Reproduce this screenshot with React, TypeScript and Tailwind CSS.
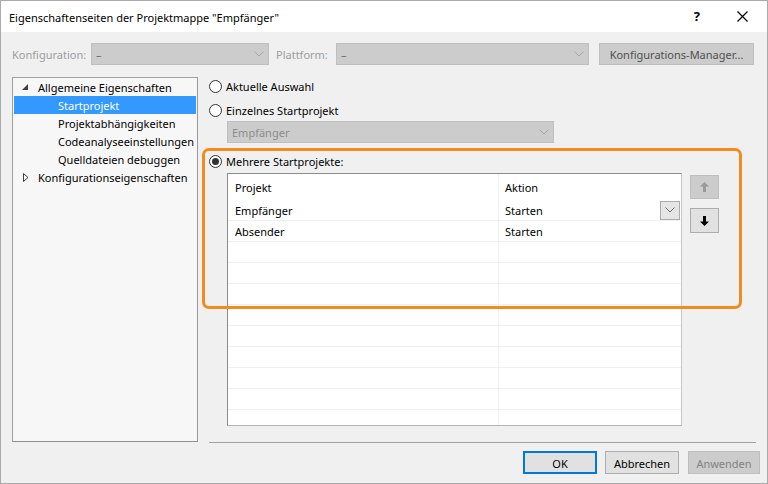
import React from "react";

function Chevron({ className = "" }: { className?: string }) {
  return (
    <svg width="10" height="6" viewBox="0 0 10 6" className={className}>
      <path d="M0.5 0.5 L5 5 L9.5 0.5" fill="none" stroke="currentColor" strokeWidth="1" />
    </svg>
  );
}

function Dropdown({ text, className, textClass }: { text: string; className: string; textClass: string }) {
  return (
    <div className={`flex items-center justify-between h-[22px] bg-[#cccccc] border border-[#bfbfbf] pl-[4px] pr-[4px] ${className}`}>
      <span className={textClass}>{text}</span>
      <Chevron className="text-[#a6a6a6]" />
    </div>
  );
}

function Radio({ checked, label }: { checked?: boolean; label: string }) {
  return (
    <div className="flex items-center h-[18px]">
      <div className="w-[13px] h-[13px] rounded-full border border-[#333333] bg-white flex items-center justify-center">
        {checked && <div className="w-[7px] h-[7px] rounded-full bg-[#333333]" />}
      </div>
      <span className="ml-[4px] pt-[1px] text-[#000000]">{label}</span>
    </div>
  );
}

function Arrow({ down, color }: { down?: boolean; color: string }) {
  return (
    <svg width="9" height="10" viewBox="0 0 9 10" className={down ? "rotate-180" : ""}>
      <path d="M4.5 0 L9 4.5 L6 4.5 L6 10 L3 10 L3 4.5 L0 4.5 Z" fill={color} />
    </svg>
  );
}

const treeItems = [
  { label: "Allgemeine Eigenschaften", level: 0, expanded: true },
  { label: "Startprojekt", level: 1, selected: true },
  { label: "Projektabhängigkeiten", level: 1 },
  { label: "Codeanalyseeinstellungen", level: 1 },
  { label: "Quelldateien debuggen", level: 1 },
  { label: "Konfigurationseigenschaften", level: 0, expanded: false },
];

const rows = [
  { projekt: "Empfänger", aktion: "Starten", combo: true },
  { projekt: "Absender", aktion: "Starten" },
  ...Array.from({ length: 9 }, () => ({ projekt: "", aktion: "" })),
];

export default function App() {
  return (
    <div className="relative w-[768px] h-[484px] overflow-hidden border border-[#aaaaaa] bg-[#f0f0f0] text-[11px] leading-none text-black font-['Segoe_UI','Noto_Sans',sans-serif] flex flex-col">
      {/* title bar */}
      <div className="h-[31px] shrink-0 bg-white flex items-center pl-[8px]">
        <span className="flex-1 pt-[1px]">Eigenschaftenseiten der Projektmappe "Empfänger"</span>
        <span className="font-bold text-[13px] mr-[37px]">?</span>
        <svg width="11" height="11" viewBox="0 0 11 11" className="mr-[19px]">
          <path d="M0.5 0.5 L10.5 10.5 M10.5 0.5 L0.5 10.5" stroke="#000" strokeWidth="1.2" />
        </svg>
      </div>

      {/* configuration row */}
      <div className="mt-[11px] h-[22px] flex items-center pl-[11px]">
        <span className="w-[79px] pt-[1px] text-[#9d9d9d]">Konfiguration:</span>
        <Dropdown text="–" className="w-[178px]" textClass="text-[#707070]" />
        <span className="ml-[7px] w-[60px] pt-[1px] text-[#9d9d9d]">Plattform:</span>
        <Dropdown text="–" className="w-[253px]" textClass="text-[#707070]" />
        <button className="ml-[10px] w-[155px] h-[22px] pt-[1px] bg-[#cccccc] border border-[#bfbfbf] text-[#505050]">
          Konfigurations-Manager...
        </button>
      </div>

      {/* main area */}
      <div className="mt-[12px] h-[366px] flex items-start">
        {/* tree */}
        <div className="ml-[11px] w-[186px] h-[365px] bg-[#f7f7f7] border border-[#a0a0a0] border-b-[#8e8e93] border-r-[#9a9a9a]">
          {treeItems.map((item) => (
            <div
              key={item.label}
              className={`h-[18px] mx-[1px] flex items-center ${item.selected ? "bg-[#3399ff] text-white" : ""}`}
            >
              <div className={`w-[24px] shrink-0 flex justify-end ${item.expanded === false ? "pr-[9px]" : "pr-[10px]"}`}>
                {item.expanded === true && (
                  <svg width="6" height="6" viewBox="0 0 6 6">
                    <path d="M6 0 L6 6 L0 6 Z" fill="#404040" />
                  </svg>
                )}
                {item.expanded === false && (
                  <svg width="6" height="9" viewBox="0 0 6 9">
                    <path d="M0.5 0.5 L5 4.5 L0.5 8.5 Z" fill="none" stroke="#404040" strokeWidth="1" />
                  </svg>
                )}
              </div>
              <span className={`pt-[1px] ${item.level === 1 ? "pl-[20px]" : ""}`}>{item.label}</span>
            </div>
          ))}
        </div>

        {/* right column */}
        <div className="ml-[11px] w-[547px] flex flex-col">
          <Radio label="Aktuelle Auswahl" />
          <div className="mt-[6px]">
            <Radio label="Einzelnes Startprojekt" />
          </div>
          <Dropdown text="Empfänger" className="mt-[2px] ml-[18px] w-[327px]" textClass="text-[#8c8c8c] pt-[1px]" />
          <div className="mt-[9px]">
            <Radio checked label="Mehrere Startprojekte:" />
          </div>

          <div className="mt-[3px] ml-[18px] flex items-start">
            {/* grid */}
            <div className="w-[455px] h-[253px] overflow-hidden bg-white border border-[#8c8c8c] border-r-[#c8c8c8] border-b-[#b4b4b8]">
              <div className="h-[26px] flex">
                <div className="w-[271px] border-r border-[#f0f0f0] pl-[7px] pt-[1px] flex items-center">Projekt</div>
                <div className="flex-1 pl-[6px] pt-[1px] flex items-center">Aktion</div>
              </div>
              {rows.map((r, i) => (
                <div key={i} className="h-[21px] flex border-b border-[#f0f0f0]">
                  <div className="w-[271px] border-r border-[#f0f0f0] pl-[7px] pt-[1px] flex items-center">{r.projekt}</div>
                  <div className="flex-1 pl-[6px] pr-[1px] flex items-center justify-between">
                    <span className="pt-[1px]">{r.aktion}</span>
                    {r.combo && (
                      <div className="w-[20px] h-[19px] bg-[#e5e5e5] border border-[#acacac] flex items-center justify-center">
                        <Chevron className="text-[#707070]" />
                      </div>
                    )}
                  </div>
                </div>
              ))}
            </div>

            {/* up / down */}
            <div className="ml-[8px] mt-[2px] flex flex-col">
              <div className="w-[29px] h-[24px] bg-[#cccccc] border border-[#bfbfbf] flex items-center justify-center">
                <Arrow color="#9a9a9a" />
              </div>
              <div className="mt-[9px] w-[29px] h-[25px] bg-[#e1e1e1] border border-[#adadad] flex items-center justify-center">
                <Arrow down color="#000000" />
              </div>
            </div>
          </div>

          <div className="mt-[16px] h-px bg-[#a0a0a0]" />
        </div>
      </div>

      {/* footer */}
      <div className="mt-[8px] flex justify-end pr-[7px] gap-[8px]">
        <button className="w-[74px] h-[23px] pt-[1px] bg-[#e1e1e1] border-2 border-[#0078d7]">OK</button>
        <button className="w-[74px] h-[23px] pt-[1px] bg-[#e1e1e1] border border-[#adadad]">Abbrechen</button>
        <button className="ml-[1px] w-[72px] h-[23px] pt-[1px] bg-[#cccccc] border border-[#bfbfbf] text-[#838383]">Anwenden</button>
      </div>

      {/* highlight annotation */}
      <div className="absolute left-[201px] top-[147px] w-[540px] h-[161px] border-[3px] border-[#f28a1e] rounded-[7px] pointer-events-none" />
    </div>
  );
}
